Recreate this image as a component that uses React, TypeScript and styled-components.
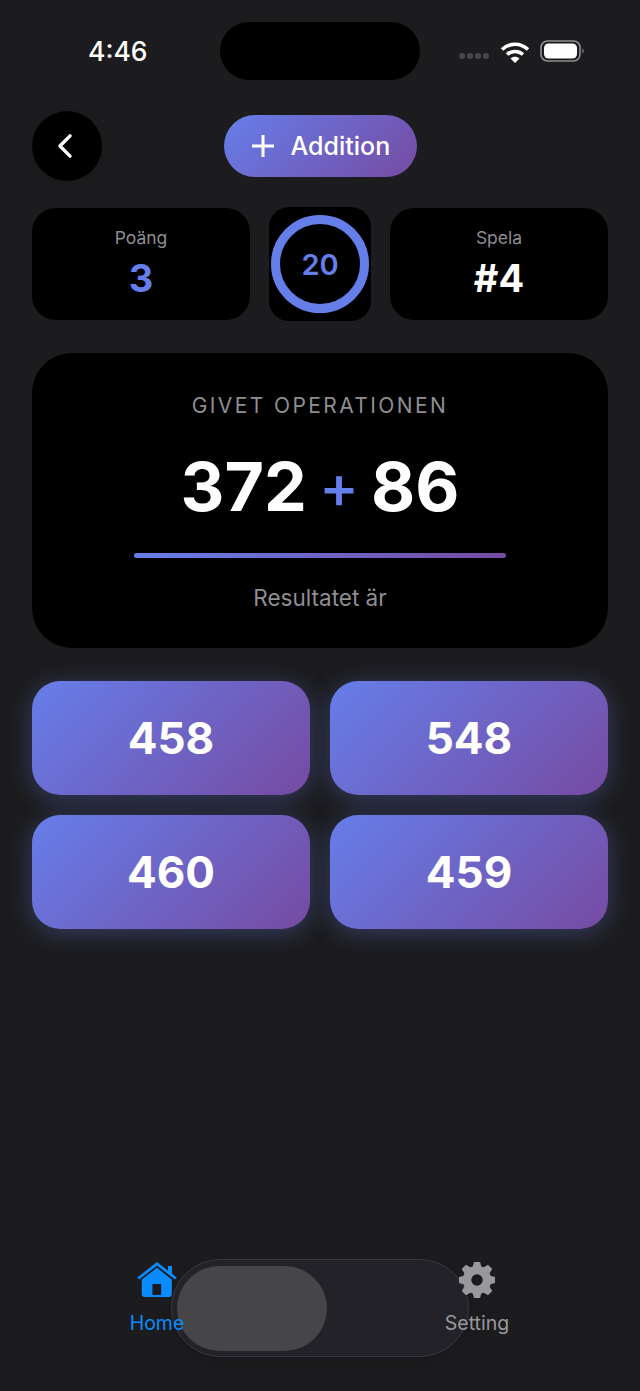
import styled, { createGlobalStyle } from "styled-components"
import { IoChevronBack } from "react-icons/io5"

const GRADIENT = "linear-gradient(135deg, #667eea 0%, #764ba2 100%)"

const GlobalStyle = createGlobalStyle`
  html, body {
    margin: 0;
    padding: 0;
    background: #1c1c1e;
  }
  * {
    box-sizing: border-box;
  }
`

const Page = styled.div`
  width: 640px;
  height: 1391px;
  display: flex;
  flex-direction: column;
  overflow: hidden;
  background: #1c1c1e;
  font-family: Inter, "Liberation Sans", sans-serif;
  color: #fff;
`

const StatusBar = styled.div`
  display: grid;
  grid-template-columns: 1fr 200px 1fr;
  align-items: center;
  padding-top: 22px;
  height: 80px;
`

const Time = styled.div`
  font-size: 26.5px;
  font-weight: 500;
  line-height: 1;
  padding-left: 88px;
`

const Island = styled.div`
  height: 58px;
  border-radius: 29px;
  background: #000;
`

const StatusIcons = styled.div`
  display: flex;
  align-items: center;
  padding-left: 39px;
`

const Dots = styled.div`
  display: flex;
  gap: 2px;
  margin-top: 9px;
`

const Dot = styled.span`
  width: 6px;
  height: 6px;
  border-radius: 50%;
  background: #48484a;
`

const WifiIcon = styled.svg`
  margin-left: 11px;
  margin-top: 3px;
`

const BatteryIcon = styled.svg`
  margin-left: 10px;
`

const Main = styled.div`
  padding: 0 32px;
`

const Header = styled.div`
  display: grid;
  grid-template-columns: 1fr auto 1fr;
  align-items: center;
  margin-top: 31px;
`

const BackButton = styled.button`
  width: 70px;
  height: 70px;
  border: 0;
  padding: 0 5px 0 0;
  border-radius: 50%;
  background: #000;
  color: #fff;
  display: flex;
  align-items: center;
  justify-content: center;
  box-shadow: 0 4px 12px rgba(0, 0, 0, 0.12);
`

const ModePill = styled.div`
  display: flex;
  align-items: center;
  gap: 17px;
  height: 62px;
  width: 193px;
  padding-left: 28px;
  border-radius: 31px;
  background: ${GRADIENT};
  font-size: 25px;
  font-weight: 500;
`

const Stats = styled.div`
  display: grid;
  grid-template-columns: 218px 102px 218px;
  justify-content: space-between;
  align-items: center;
  margin-top: 26px;
`

const StatCard = styled.div`
  height: 112px;
  border-radius: 24px;
  background: #000;
  display: flex;
  flex-direction: column;
  align-items: center;
  padding-top: 19px;
`

const StatLabel = styled.div`
  font-size: 17.5px;
  line-height: 22px;
  color: #8e8e93;
`

const StatValue = styled.div<{ $accent?: boolean }>`
  font-size: 38px;
  line-height: 44px;
  font-weight: 700;
  margin-top: 7px;
  color: ${(p) => (p.$accent ? "#667eea" : "#fff")};
`

const TimerCard = styled.div`
  height: 114px;
  border-radius: 20px;
  background: #000;
  display: flex;
  align-items: center;
  justify-content: center;
`

const TimerRing = styled.div`
  width: 98px;
  height: 98px;
  border-radius: 50%;
  border: 9px solid #667eea;
  display: flex;
  align-items: center;
  justify-content: center;
  font-size: 29px;
  font-weight: 600;
  color: #667eea;
`

const QuestionCard = styled.div`
  height: 295px;
  margin-top: 32px;
  border-radius: 40px;
  background: #000;
  display: flex;
  flex-direction: column;
  align-items: center;
  padding-top: 39px;
`

const QuestionLabel = styled.div`
  font-size: 21px;
  line-height: 28px;
  letter-spacing: 2.4px;
  color: #8e8e93;
`

const Equation = styled.div`
  display: flex;
  align-items: center;
  gap: 12px;
  margin-top: 24px;
  height: 84px;
  font-size: 68px;
  font-weight: 700;
`

const Operator = styled.span`
  font-size: 60px;
  line-height: 1;
  font-weight: 500;
  color: #667eea;
`

const Divider = styled.div`
  width: 372px;
  height: 5px;
  border-radius: 3px;
  margin-top: 25px;
  background: linear-gradient(90deg, #667eea 0%, #764ba2 100%);
`

const ResultLabel = styled.div`
  margin-top: 26px;
  font-size: 22.5px;
  line-height: 28px;
  color: #8e8e93;
`

const Answers = styled.div`
  display: grid;
  grid-template-columns: 1fr 1fr;
  gap: 20px;
  margin-top: 33px;
`

const AnswerButton = styled.button`
  height: 114px;
  border: 0;
  padding: 0;
  border-radius: 28px;
  background: ${GRADIENT};
  box-shadow: 0 4px 24px rgba(102, 126, 234, 0.34);
  color: #fff;
  font-family: inherit;
  font-size: 44px;
  font-weight: 700;
`

const TabBar = styled.div`
  position: relative;
  margin-top: auto;
  height: 153px;
  display: grid;
  grid-template-columns: 314px 326px;
`

const TabItem = styled.div<{ $active?: boolean }>`
  position: relative;
  z-index: 1;
  display: flex;
  flex-direction: column;
  align-items: center;
  padding-top: 24px;
  color: ${(p) => (p.$active ? "#0a8cff" : "#98989d")};
`

const TabLabel = styled.div`
  margin-top: 13px;
  font-size: 19.5px;
  line-height: 24px;
`

const LensTrack = styled.div`
  position: absolute;
  left: 171px;
  top: 21px;
  width: 298px;
  height: 98px;
  border-radius: 49px;
  border: 1px solid #383844;
  background: #222228;
  box-shadow: 0 4px 16px rgba(0, 0, 0, 0.15);
`

const LensThumb = styled.div`
  position: absolute;
  left: 5px;
  top: 6px;
  width: 150px;
  height: 85px;
  border-radius: 43px;
  background: #464648;
`

// 8 toothed gear, one tooth straight up
const gearPath = () => {
  const points: string[] = []
  for (let i = 0; i < 8; i++) {
    const a = (i * Math.PI) / 4 - Math.PI / 2
    const step = [
      [-0.27, 13.5],
      [-0.13, 18],
      [0.13, 18],
      [0.27, 13.5],
    ]
    step.forEach(([da, r]) => {
      points.push(`${(18 + r * Math.cos(a + da)).toFixed(2)} ${(18 + r * Math.sin(a + da)).toFixed(2)}`)
    })
  }
  return `M${points.join("L")}Z`
}

const HomeIcon = () => (
  <svg width="40" height="36" viewBox="0 0 40 36">
    <path d="M31 4h4v8h-4z" fill="currentColor" />
    <path d="M1.2 16.5L20 1.8L38.8 16.5" fill="none" stroke="currentColor" strokeWidth="2.8" />
    <path
      fillRule="evenodd"
      fill="currentColor"
      d="M20 5.8L34.8 17.5V32a3 3 0 0 1-3 3H7.8a3 3 0 0 1-3-3V17.5ZM15.4 22v11h8.8V22Z"
    />
  </svg>
)

const GearIcon = () => (
  <svg width="36" height="36" viewBox="0 0 36 36">
    <path d={gearPath()} fill="currentColor" strokeLinejoin="round" stroke="currentColor" strokeWidth="1.5" />
    <circle cx="18" cy="18" r="5" fill="#1c1c1e" stroke="#1c1c1e" strokeWidth="1.5" />
  </svg>
)

export default function App() {
  return (
    <Page>
      <GlobalStyle />
      <StatusBar>
        <Time>4:46</Time>
        <Island />
        <StatusIcons>
          <Dots>
            <Dot />
            <Dot />
            <Dot />
            <Dot />
          </Dots>
          <WifiIcon width="30" height="24" viewBox="0 0 30 24">
            <path d="M2 8.5C9.5 1.5 20.5 1.5 28 8.5" fill="none" stroke="#fff" strokeWidth="3.6" />
            <path d="M7 13.5C11.5 9.5 18.5 9.5 23 13.5" fill="none" stroke="#fff" strokeWidth="3.6" />
            <path d="M10.5 17.5C13 15.2 17 15.2 19.5 17.5L15 22Z" fill="#fff" />
          </WifiIcon>
          <BatteryIcon width="46" height="22" viewBox="0 0 46 22">
            <rect x="1" y="1" width="39" height="20" rx="6.5" fill="none" stroke="#8e8e93" strokeWidth="1.6" />
            <rect x="4" y="3.5" width="33" height="15" rx="4.5" fill="#fff" />
            <path d="M42 8.5C43.5 9 44 10 44 11C44 12 43.5 13 42 13.5Z" fill="#636366" />
          </BatteryIcon>
        </StatusIcons>
      </StatusBar>
      <Main>
        <Header>
          <BackButton>
            <IoChevronBack size={36} />
          </BackButton>
          <ModePill>
            <svg width="22" height="22" viewBox="0 0 22 22">
              <path d="M11 0v22M0 11h22" stroke="#fff" strokeWidth="3" strokeLinecap="round" />
            </svg>
            Addition
          </ModePill>
        </Header>
        <Stats>
          <StatCard>
            <StatLabel>Poäng</StatLabel>
            <StatValue $accent>3</StatValue>
          </StatCard>
          <TimerCard>
            <TimerRing>20</TimerRing>
          </TimerCard>
          <StatCard>
            <StatLabel>Spela</StatLabel>
            <StatValue>#4</StatValue>
          </StatCard>
        </Stats>
        <QuestionCard>
          <QuestionLabel>GIVET OPERATIONEN</QuestionLabel>
          <Equation>
            <span>372</span>
            <Operator>+</Operator>
            <span>86</span>
          </Equation>
          <Divider />
          <ResultLabel>Resultatet är</ResultLabel>
        </QuestionCard>
        <Answers>
          <AnswerButton>458</AnswerButton>
          <AnswerButton>548</AnswerButton>
          <AnswerButton>460</AnswerButton>
          <AnswerButton>459</AnswerButton>
        </Answers>
      </Main>
      <TabBar>
        <LensTrack>
          <LensThumb />
        </LensTrack>
        <TabItem $active>
          <HomeIcon />
          <TabLabel>Home</TabLabel>
        </TabItem>
        <TabItem>
          <GearIcon />
          <TabLabel>Setting</TabLabel>
        </TabItem>
      </TabBar>
    </Page>
  )
}
